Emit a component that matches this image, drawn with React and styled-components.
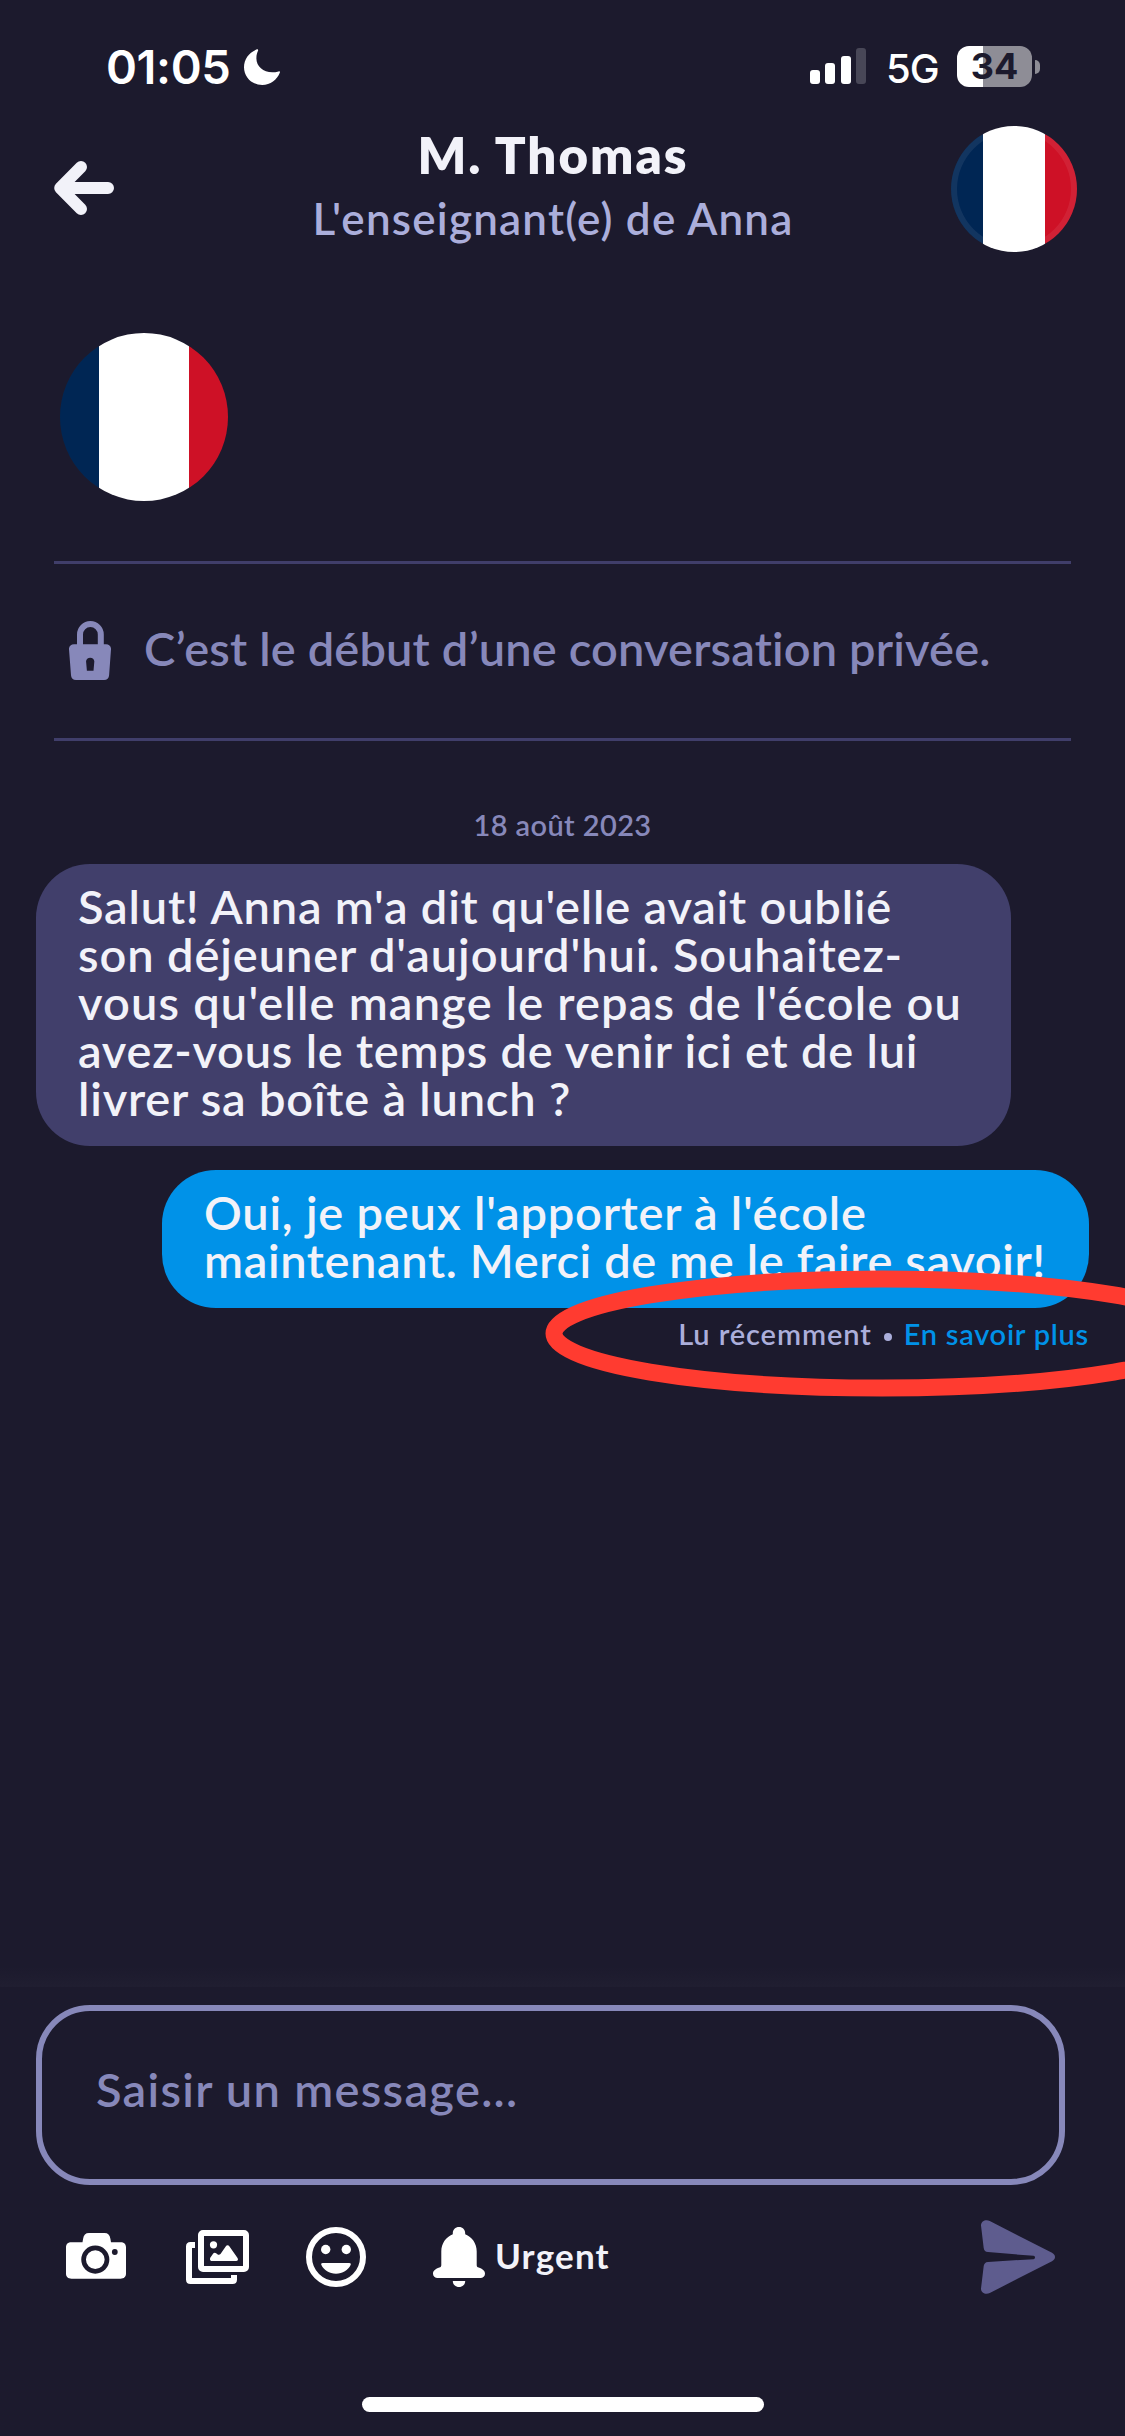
import React from "react";
import styled, { createGlobalStyle } from "styled-components";

const color = {
  bg: "#1c1a2d",
  line: "#403e6a",
  muted: "#8788ba",
  soft: "#abaedb",
  text: "#f2f2f9",
  blue: "#0092e8",
  red: "#ff3b30",
  send: "#5e5c8e",
};

const GlobalStyle = createGlobalStyle`
  * { box-sizing: border-box; }
  body { margin: 0; background: ${color.bg}; }
  svg { display: block; flex: none; }
`;

const Screen = styled.div`
  display: flex;
  flex-direction: column;
  width: 1125px;
  height: 2436px;
  overflow: hidden;
  background: ${color.bg};
  color: ${color.text};
  font-family: Lato, "Open Sans", sans-serif;
  font-weight: 600;
  font-variant-ligatures: none;
  white-space: nowrap;
`;

const StatusBar = styled.div`
  display: flex;
  justify-content: space-between;
  height: 114px;
  padding: 46px 85px 0 105px;
  color: #fff;
  font-family: Inter, "Liberation Sans", sans-serif;
`;

const StatusLeft = styled.div`
  display: flex;
  align-items: center;
  gap: 13px;
  height: 42px;
`;

const Clock = styled.span`
  width: 126px;
  padding-left: 1px;
  font-size: 47px;
  line-height: 42px;
  letter-spacing: -0.4px;
`;

const StatusRight = styled.div`
  display: flex;
  align-items: flex-start;
`;

const Signal = styled.div`
  display: flex;
  align-items: flex-end;
  gap: 5.5px;
  height: 38px;
`;

const Bar = styled.i`
  width: 10px;
  height: ${(p) => p.$h}px;
  border-radius: 3px;
  background: ${(p) => (p.$off ? "#484757" : "#fff")};
`;

const Network = styled.span`
  width: 54px;
  margin: 3px 17px 0 20px;
  font-size: 40px;
  font-weight: 500;
  line-height: 40px;
  letter-spacing: -1px;
`;

const Battery = styled.div`
  display: flex;
  align-items: center;
  justify-content: center;
  width: 75px;
  height: 41px;
  border-radius: 12px;
  background: linear-gradient(90deg, #fff 26px, #8e8d96 26px);
  color: ${color.bg};
  font-size: 36px;
  font-weight: 700;
  line-height: 41px;
`;

const BatteryCap = styled.i`
  width: 5px;
  height: 14px;
  margin: 14px 0 0 3px;
  border-radius: 0 5px 5px 0;
  background: #8e8d96;
`;

const Header = styled.header`
  display: flex;
  align-items: flex-start;
  height: 150px;
  padding: 12px 48px 0 54px;
`;

const BackButton = styled.div`
  padding-top: 35px;
`;

const Heading = styled.div`
  flex: 1;
  display: flex;
  flex-direction: column;
  align-items: center;
  padding: 0 0 0 41px;
`;

const Title = styled.h1`
  margin: -1px 0 8px;
  font-size: 51px;
  font-weight: 800;
  line-height: 60px;
  letter-spacing: 2px;
`;

const Subtitle = styled.div`
  color: ${color.soft};
  font-size: 44px;
  line-height: 50px;
  letter-spacing: 1.2px;
`;

const Flag = styled.div`
  width: ${(p) => p.$size}px;
  height: ${(p) => p.$size}px;
  border-radius: 50%;
  background: linear-gradient(
    90deg,
    #002654 ${(p) => p.$a}px,
    #fff ${(p) => p.$a}px ${(p) => p.$b}px,
    #ce1126 ${(p) => p.$b}px
  );
  box-shadow: ${(p) => (p.$ring ? "inset 0 0 0 6px rgba(255, 255, 255, 0.07)" : "none")};
`;

const Conversation = styled.main`
  flex: 1;
  display: flex;
  flex-direction: column;
`;

const FlagRow = styled.div`
  padding: 69px 60px 60px;
`;

const PrivateNotice = styled.section`
  display: flex;
  align-items: center;
  gap: 33px;
  height: 180px;
  margin: 0 54px;
  padding: 0 0 2px 15px;
  border: solid ${color.line};
  border-width: 3px 0;
`;

const NoticeText = styled.p`
  margin: 0;
  padding-bottom: 4px;
  color: ${color.muted};
  font-size: 47px;
  line-height: 60px;
  letter-spacing: 0.15px;
`;

const DateLabel = styled.div`
  margin: 67px 0 22px;
  text-align: center;
  color: ${color.muted};
  font-size: 29px;
  line-height: 34px;
  letter-spacing: 0.4px;
`;

const Bubble = styled.div`
  align-self: ${(p) => (p.$own ? "flex-end" : "flex-start")};
  width: ${(p) => (p.$own ? 927 : 975)}px;
  margin: ${(p) => (p.$own ? "24px 36px 0 0" : "0 0 0 36px")};
  padding: 18px 42px 24px;
  border-radius: 54px;
  background: ${(p) => (p.$own ? color.blue : "#413f6b")};
`;

const Line = styled.div`
  font-size: 47px;
  line-height: 48px;
  letter-spacing: ${(p) => p.$track}px;
`;

const Receipt = styled.div`
  position: relative;
  display: flex;
  align-items: center;
  justify-content: flex-end;
  margin-top: 8px;
  padding-right: 36px;
  color: ${color.soft};
  font-size: 29px;
  line-height: 36px;
  letter-spacing: 0.9px;
`;

const Dot = styled.i`
  width: 8px;
  height: 8px;
  margin: 5px 12px 0 12px;
  border-radius: 50%;
  background: ${color.soft};
`;

const MoreLink = styled.a`
  color: ${color.blue};
  letter-spacing: 0.75px;
`;

const Highlight = styled.svg`
  position: absolute;
  left: 540px;
  top: -51px;
`;

const Fade = styled.div`
  height: 20px;
  background: linear-gradient(${color.bg}, #201e31);
`;

const Composer = styled.footer`
  height: 449px;
  padding-top: 18px;
`;

const MessageInput = styled.div`
  display: flex;
  align-items: center;
  width: 1029px;
  height: 180px;
  margin-left: 36px;
  padding: 0 54px 12px;
  border: 6px solid ${color.muted};
  border-radius: 54px;
  color: ${color.muted};
  font-size: 47px;
  line-height: 60px;
  letter-spacing: 1.3px;
`;

const Toolbar = styled.div`
  display: flex;
  align-items: center;
  height: 144px;
  padding: 0 70px 0 66px;
`;

const Tool = styled.div`
  display: flex;
  align-items: center;
  margin-right: ${(p) => p.$gap || 0}px;
  padding-bottom: ${(p) => p.$lift || 0}px;
`;

const UrgentLabel = styled.span`
  padding: 0 0 5px 10px;
  font-size: 35px;
  font-weight: 700;
  line-height: 40px;
  letter-spacing: 1.2px;
`;

const SendButton = styled.div`
  margin-left: auto;
`;

const HomeIndicator = styled.div`
  width: 402px;
  height: 15px;
  margin: 68px auto 0;
  border-radius: 8px;
  background: #fff;
`;

const received = [
  ["Salut! Anna m'a dit qu'elle avait oublié", 0.8],
  ["son déjeuner d'aujourd'hui. Souhaitez-", 0.9],
  ["vous qu'elle mange le repas de l'école ou", 1.18],
  ["avez-vous le temps de venir ici et de lui", 0.78],
  ["livrer sa boîte à lunch ?", 0.8],
];

const sent = [
  ["Oui, je peux l'apporter à l'école", 0.78],
  ["maintenant. Merci de me le faire savoir!", 0.62],
];

const MoonIcon = () => (
  <svg width="36" height="36" viewBox="0 0 36 36" fill="#fff">
    <path d="M12.900.3C5 3.500 0 10 0 18.200 0 28 8 36 18.300 36c8 0 14.700-5 17.600-12.400.3-1-.3-1.600-1.300-1.200C22.500 26 12 19 12.400 9c0-3 .7-5 1.700-7.400.3-1-.2-1.700-1.200-1.300z" />
  </svg>
);

const BackIcon = () => (
  <svg width="60" height="54" viewBox="0 0 60 54" fill="none" stroke={color.text} strokeWidth="12" strokeLinecap="round" strokeLinejoin="round">
    <path d="M27 6 6.200 27 27 48M8 27h46" />
  </svg>
);

const LockIcon = () => (
  <svg width="42" height="59" viewBox="0 0 42 59">
    <path d="M11 26V13.500a10.400 10.400 0 0 1 20.800 0V26" fill="none" stroke={color.muted} strokeWidth="6" />
    <path
      fillRule="evenodd"
      fill={color.muted}
      d="M5 23.200h32c3 0 5.200 2 5 5l-1.900 26c-.2 3-2 4.800-5 4.800H7c-3 0-4.800-1.800-5-4.800L0 28.200c-.2-3 2-5 5-5zM21.200 36.700c-2.400 0-4.300 1.700-4.100 4l.8 9h6.600l.8-9c.2-2.300-1.700-4-4.100-4z"
    />
  </svg>
);

const CameraIcon = () => (
  <svg width="60" height="46" viewBox="0 0 60 46">
    <path fill="#fff" d="M5.500 9.300h11l.6-3.500C17.700 2 19.500 0 23 0h15.500c3.500 0 5.300 2 5.900 5.800l.6 3.500h9.500C58 9.300 60 11.200 60 14.500v26c0 3.300-2 5.200-5.500 5.200h-49C2 45.700 0 43.800 0 40.500v-26c0-3.300 2-5.200 5.500-5.200z" />
    <circle cx="29.300" cy="26.600" r="11.700" fill="#fff" stroke={color.bg} strokeWidth="4.700" />
    <circle cx="48.800" cy="19" r="2.900" fill={color.bg} />
  </svg>
);

const GalleryIcon = () => (
  <svg width="63" height="54" viewBox="0 0 63 54" fill="none" stroke="#fff" strokeWidth="6" strokeLinejoin="round">
    <rect x="15" y="3" width="45" height="36" rx="2" />
    <path d="M9 15H4.500Q3 15 3 16.500V49.500Q3 51 4.500 51H46.500Q48 51 48 49.500V45" />
    <g fill="#fff" stroke="none">
      <circle cx="27.500" cy="14.800" r="3.600" />
      <path d="M24 29.200c0-1 .2-1.500.8-2.300l2.400-3.400c.8-1 2-1.100 2.900-.3l1.300 1.100c1 .8 2.300.7 3.100-.3l5.200-7.600c1-1.700 2.700-1.700 3.800 0l7.700 11c1.500 2.200.7 3.600-1.600 3.600H26c-1.300 0-2-.600-2-1.800z" />
    </g>
  </svg>
);

const SmileIcon = () => (
  <svg width="60" height="60" viewBox="0 0 60 60" fill="#fff">
    <circle cx="30" cy="30" r="27" fill="none" stroke="#fff" strokeWidth="6" />
    <circle cx="19.700" cy="22.500" r="4.700" />
    <circle cx="40.300" cy="22.500" r="4.700" />
    <path d="M16.800 36h26.400c1.400 0 2 .9 1.400 2.100C42 43.500 36.800 46.700 30 46.700S18 43.500 15.400 38.100c-.6-1.200 0-2.100 1.400-2.100z" />
  </svg>
);

const BellIcon = () => (
  <svg width="52" height="60" viewBox="0 0 52 60" fill="#fff">
    <path d="M26 0c3.600 0 6.200 2.600 6.200 6.400v.9C39 10 43.700 16.500 43.700 24.500V38c0 1.500.6 2 2 2.600C49.300 41.900 52 43.700 52 46.700c0 2.600-2 4.300-4.600 4.300H4.600C2 51 0 49.300 0 46.700c0-3 2.700-4.800 6.300-6.100 1.400-.6 2-1.100 2-2.600V24.500C8.300 16.500 13 10 19.800 7.300v-.9C19.800 2.600 22.400 0 26 0z" />
    <path d="M19.800 54h12.400c0 3.500-2.700 6-6.200 6s-6.200-2.500-6.200-6z" />
  </svg>
);

const SendIcon = () => (
  <svg width="74" height="74" viewBox="0 0 74 74" fill={color.send}>
    <path d="M0 5.500C-.2 1.500 4.500-1.200 8.800 1L71 32.800c4 2.300 4 6.100 0 8.400L8.800 73C4.500 75.200-.2 72.500 0 68.500L2.700 46c.4-2.600 1.700-3.900 4.300-4.100l45.500-2.700c2-.3 2-3.100 0-3.400L7 32.100C4.400 31.900 3.100 30.600 2.700 28z" />
  </svg>
);

export default function App() {
  return (
    <Screen>
      <GlobalStyle />
      <StatusBar>
        <StatusLeft>
          <Clock>01:05</Clock>
          <MoonIcon />
        </StatusLeft>
        <StatusRight>
          <Signal>
            <Bar $h={14} />
            <Bar $h={21} />
            <Bar $h={28} />
            <Bar $h={36} $off />
          </Signal>
          <Network>5G</Network>
          <Battery>34</Battery>
          <BatteryCap />
        </StatusRight>
      </StatusBar>

      <Header>
        <BackButton>
          <BackIcon />
        </BackButton>
        <Heading>
          <Title>M. Thomas</Title>
          <Subtitle>L'enseignant(e) de Anna</Subtitle>
        </Heading>
        <Flag $size={126} $a={32} $b={94.5} $ring />
      </Header>

      <Conversation>
        <FlagRow>
          <Flag $size={168} $a={39} $b={129} />
        </FlagRow>
        <PrivateNotice>
          <LockIcon />
          <NoticeText>C’est le début d’une conversation privée.</NoticeText>
        </PrivateNotice>
        <DateLabel>18 août 2023</DateLabel>
        <Bubble>
          {received.map(([text, track]) => (
            <Line key={text} $track={track}>{text}</Line>
          ))}
        </Bubble>
        <Bubble $own>
          {sent.map(([text, track]) => (
            <Line key={text} $track={track}>{text}</Line>
          ))}
        </Bubble>
        <Receipt>
          <span>Lu récemment</span>
          <Dot />
          <MoreLink>En savoir plus</MoreLink>
          <Highlight width="585" height="136" viewBox="540 1265 585 136">
            <ellipse cx="882" cy="1333.500" rx="328" ry="54.500" fill="none" stroke={color.red} strokeWidth="17" />
          </Highlight>
        </Receipt>
      </Conversation>

      <Fade />
      <Composer>
        <MessageInput>Saisir un message...</MessageInput>
        <Toolbar>
          <Tool $gap={60} $lift={2}><CameraIcon /></Tool>
          <Tool $gap={57}><GalleryIcon /></Tool>
          <Tool $gap={67}><SmileIcon /></Tool>
          <Tool>
            <BellIcon />
            <UrgentLabel>Urgent</UrgentLabel>
          </Tool>
          <SendButton>
            <SendIcon />
          </SendButton>
        </Toolbar>
        <HomeIndicator />
      </Composer>
    </Screen>
  );
}
